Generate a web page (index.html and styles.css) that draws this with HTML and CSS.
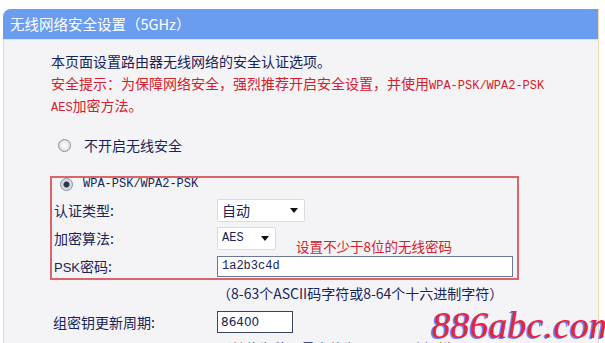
FILE: index.html
```html
<!DOCTYPE html>
<html lang="zh-CN">
<head>
  <meta charset="UTF-8" />
  <title>无线网络安全设置（5GHz）</title>
  <link rel="stylesheet" href="styles.css">
</head>
<body>
  <div class="panel">
    <div class="panel-title">无线网络安全设置（5GHz）</div>
    <div class="panel-body">
      <div class="intro">
        <p>本页面设置路由器无线网络的安全认证选项。</p>
        <p class="warn">安全提示：为保障网络安全，强烈推荐开启安全设置，并使用<span class="mono">WPA-PSK/WPA2-PSK</span></p>
        <p class="warn"><span class="mono">AES</span>加密方法。</p>
      </div>

      <div class="radio-row off">
        <span class="radio"></span>
        <span>不开启无线安全</span>
      </div>

      <!-- WPA-PSK 选项 -->
      <div class="wpa-box">
        <div class="radio-row on">
          <span class="radio checked"></span>
          <span class="mono">WPA-PSK/WPA2-PSK</span>
        </div>
        <div class="field">
          <label>认证类型:</label>
          <div class="select wide"><span>自动</span><i class="caret"></i></div>
        </div>
        <div class="field">
          <label>加密算法:</label>
          <div class="select narrow"><span class="mono">AES</span><i class="caret"></i></div>
          <span class="hint">设置不少于8位的无线密码</span>
        </div>
        <div class="field">
          <label><span class="mono-sm">PSK</span>密码:</label>
          <div class="text-input psk"><span class="mono">1a2b3c4d</span></div>
        </div>
      </div>

      <p class="note">（8-63个ASCII码字符或8-64个十六进制字符）</p>

      <div class="field group">
        <label>组密钥更新周期:</label>
        <div class="text-input period">86400</div>
      </div>
      <p class="note">（单位为秒，最小值为30，不更新则为0）</p>
    </div>
  </div>

  <div class="watermark">886abc.com</div>
</body>
</html>
```

FILE: styles.css
```css
body {
  margin: 0;
  background: #fff;
  font-family: "Noto Sans CJK SC", "Noto Sans", sans-serif;
  font-size: 14px;
  color: #18245a;
  overflow: hidden;
  height: 343px;
}
p {
  margin: 0;
}
.mono {
  font-family: "Liberation Mono", monospace;
  font-size: 12px;
  line-height: 1;
}
.mono-sm {
  font-family: "Liberation Sans", sans-serif;
  font-size: 13px;
  line-height: 1;
}

.panel {
  margin: 9px 0 0 3px;
  width: 594px;
  background: #f4f4f6;
  border-left: 1px solid #efd9ae;
  border-right: 1px solid #efd9ae;
  border-top-left-radius: 8px;
  height: 400px;
}
.panel-title {
  height: 30px;
  line-height: 30px;
  padding-left: 7px;
  background: #6a9cef;
  color: #fff;
  border-top-left-radius: 8px;
  margin-left: -1px;
  font-size: 14.5px;
  border-bottom: 1px solid #d7e2f5;
}
.panel-body {
  padding: 10px 0 0 46px;
}

.intro {
  padding-left: 1px;
  line-height: 22px;
}
.warn {
  color: #d4202a;
}

/* 单选按钮 */
.radio-row {
  display: flex;
  align-items: center;
}
.radio-row.off {
  margin-top: 18px;
  height: 22px;
  padding-left: 8px;
  gap: 13px;
}
.radio {
  width: 11px;
  height: 11px;
  border-radius: 50%;
  border: 1px solid #8d8f96;
  background: radial-gradient(circle, #fff 0, #f0f0f0 40%, #c9cbd0 100%);
}
.radio.checked {
  background: radial-gradient(circle, #2a3348 0, #2a3348 30%, #cfd3da 45%, #eef0f3 100%);
}

/* WPA 红框 */
.wpa-box {
  margin-top: 20px;
  width: 463px;
  border: 2px solid #d9646a;
  padding: 0 0 1px 2px;
  display: flex;
  flex-direction: column;
  gap: 6px;
}
.radio-row.on {
  height: 12px;
  padding-left: 6px;
  gap: 10px;
  margin-bottom: 3px;
}

.field {
  display: flex;
  align-items: center;
  height: 22px;
}
.field label {
  width: 163px;
  flex: none;
}
.select {
  box-sizing: border-box;
  height: 23px;
  background: #fff;
  border: 1px solid #dcdcdc;
  border-radius: 2px;
  display: flex;
  align-items: center;
  justify-content: space-between;
  padding: 0 6px 0 4px;
}
.select.wide {
  width: 88px;
}
.select.narrow {
  width: 59px;
}
.caret {
  width: 0;
  height: 0;
  border-left: 4px solid transparent;
  border-right: 4px solid transparent;
  border-top: 5px solid #111;
}
.hint {
  color: #d4202a;
  margin-left: 20px;
  align-self: flex-end;
  margin-bottom: -7px;
  font-size: 13.5px;
}
.text-input {
  box-sizing: border-box;
  background: #fff;
  border: 1px solid #6d7896;
  padding-left: 4px;
  display: flex;
  align-items: center;
}
.text-input.psk {
  width: 296px;
  height: 21px;
}
.text-input.period {
  width: 76px;
  height: 22px;
  border-color: #3c4460;
  font-family: "DejaVu Sans", sans-serif;
  font-size: 12px;
  padding-left: 3px;
}

.note {
  line-height: 22px;
  padding-left: 167px;
  margin-top: 2px;
}
.field.group {
  margin-top: 7px;
  padding-left: 3px;
}
.field.group label {
  width: 164px;
}
.field.group + .note {
  margin-top: 4px;
}

/* 水印 */
.watermark {
  position: absolute;
  left: 432px;
  top: 304px;
  font-family: "Liberation Serif", serif;
  font-style: italic;
  font-size: 37px;
  color: #ef2238;
  text-shadow: -2px 1px 0 rgba(60, 90, 255, 0.75);
  letter-spacing: 0.5px;
}
```
